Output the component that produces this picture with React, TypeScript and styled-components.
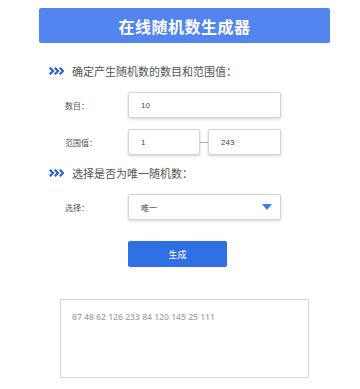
import styled, { createGlobalStyle } from 'styled-components';

const GlobalStyle = createGlobalStyle`
  body {
    margin: 0;
    background: #ffffff;
    font-family: "Liberation Sans", "Noto Sans CJK SC", sans-serif;
  }
`;

const Page = styled.div`
  width: 291px;
  margin: 8px 0 0 39px;
  display: flex;
  flex-direction: column;
`;

const Header = styled.div`
  height: 35px;
  background-color: #5385f1;
  border-radius: 2px;
  display: flex;
  align-items: center;
  justify-content: center;
  color: #ffffff;
  font-size: 16px;
  font-weight: bold;
  letter-spacing: 0.5px;
`;

const SectionTitle = styled.div<{ $top: number }>`
  display: flex;
  align-items: center;
  margin-top: ${(p) => p.$top}px;
  padding-left: 10px;
  height: 16px;
  font-size: 11px;
  color: #555555;
`;

const Chevrons = styled.svg`
  width: 15px;
  height: 8px;
  margin-right: 8px;
`;

const Row = styled.div<{ $top: number }>`
  display: flex;
  align-items: center;
  margin-top: ${(p) => p.$top}px;
  padding-left: 26px;
`;

const Label = styled.span`
  width: 63px;
  font-size: 8px;
  color: #555555;
`;

const Field = styled.div<{ $width: number }>`
  box-sizing: border-box;
  width: ${(p) => p.$width}px;
  height: 26px;
  border: 1px solid #d6d6d6;
  border-radius: 2px;
  box-shadow: 0 1px 3px rgba(0, 0, 0, 0.18);
  display: flex;
  align-items: center;
  justify-content: space-between;
  padding: 0 8px 0 12px;
  font-size: 8px;
  color: #444444;
  background: #ffffff;
`;

const Dash = styled.span`
  width: 8px;
  height: 1px;
  background: #aaaaaa;
`;

const Arrow = styled.span`
  width: 0;
  height: 0;
  border-left: 5px solid transparent;
  border-right: 5px solid transparent;
  border-top: 6px solid #3f7ae8;
`;

const GenerateButton = styled.button`
  margin: 21px 0 0 89px;
  width: 99px;
  height: 26px;
  border: none;
  border-radius: 2px;
  background-color: #2f6fe4;
  color: #ffffff;
  font-family: "Liberation Sans", "Noto Sans CJK SC", sans-serif;
  font-size: 9px;
  padding: 0;
`;

const Output = styled.div`
  box-sizing: border-box;
  margin: 32px 0 0 21px;
  width: 249px;
  height: 79px;
  border: 1px solid #d8d8d8;
  padding: 11px 0 0 11px;
  font-family: "Open Sans", "Liberation Sans", sans-serif;
  font-size: 8.6px;
  font-weight: 600;
  color: #a8a8a8;
`;

const ChevronIcon = () => (
  <Chevrons viewBox="0 0 15 8">
    {[0, 5, 10].map((x) => (
      <path key={x} d={`M${x + 0.8} 0.8 L${x + 4} 4 L${x + 0.8} 7.2`} fill="none" stroke="#2b5fd4" strokeWidth="2.2" />
    ))}
  </Chevrons>
);

export default function App() {
  return (
    <>
      <GlobalStyle />
      <Page>
        <Header>在线随机数生成器</Header>
        <SectionTitle $top={20}>
          <ChevronIcon />
          确定产生随机数的数目和范围值：
        </SectionTitle>
        <Row $top={13}>
          <Label>数目：</Label>
          <Field $width={153}>10</Field>
        </Row>
        <Row $top={11}>
          <Label>范围值：</Label>
          <Field $width={72}>1</Field>
          <Dash />
          <Field $width={73}>243</Field>
        </Row>
        <SectionTitle $top={10}>
          <ChevronIcon />
          选择是否为唯一随机数：
        </SectionTitle>
        <Row $top={13}>
          <Label>选择：</Label>
          <Field $width={153}>
            唯一
            <Arrow />
          </Field>
        </Row>
        <GenerateButton>生成</GenerateButton>
        <Output>87 48 62 126 233 84 120 145 25 111</Output>
      </Page>
    </>
  );
}
